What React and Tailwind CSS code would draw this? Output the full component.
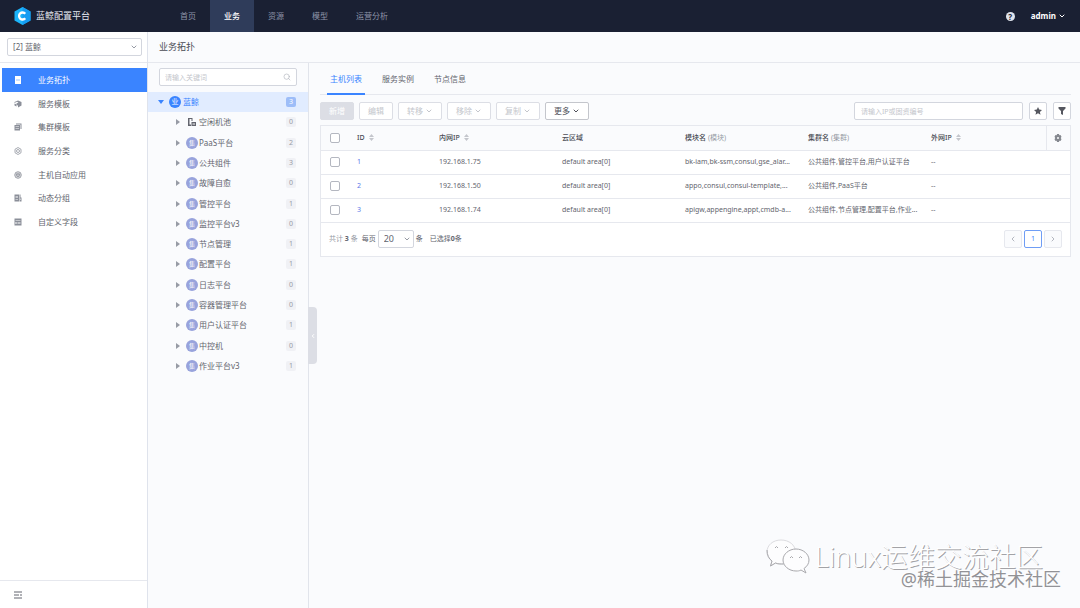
import { useState } from 'react'
import { ChevronDown, ChevronLeft, ChevronRight, Search } from 'lucide-react'

const NAV = ['首页', '业务', '资源', '模型', '运营分析']

const MENU = [
  { label: '业务拓扑', icon: 'topology' },
  { label: '服务模板', icon: 'service' },
  { label: '集群模板', icon: 'cluster' },
  { label: '服务分类', icon: 'category' },
  { label: '主机自动应用', icon: 'apply' },
  { label: '动态分组', icon: 'group' },
  { label: '自定义字段', icon: 'field' },
]

const TREE = [
  { name: '空闲机池', count: 0, idle: true },
  { name: 'PaaS平台', count: 2 },
  { name: '公共组件', count: 3 },
  { name: '故障自愈', count: 0 },
  { name: '管控平台', count: 1 },
  { name: '监控平台v3', count: 0 },
  { name: '节点管理', count: 1 },
  { name: '配置平台', count: 1 },
  { name: '日志平台', count: 0 },
  { name: '容器管理平台', count: 0 },
  { name: '用户认证平台', count: 1 },
  { name: '中控机', count: 0 },
  { name: '作业平台v3', count: 1 },
]

const COLUMNS = [
  { title: 'ID', sortable: true },
  { title: '内网IP', sortable: true },
  { title: '云区域' },
  { title: '模块名', note: '(模块)' },
  { title: '集群名', note: '(集群)' },
  { title: '外网IP', sortable: true },
]

const HOSTS = [
  { id: 1, ip: '192.168.1.75', area: 'default area[0]', module: 'bk-iam,bk-ssm,consul,gse_alar...', set: '公共组件,管控平台,用户认证平台' },
  { id: 2, ip: '192.168.1.50', area: 'default area[0]', module: 'appo,consul,consul-template,...', set: '公共组件,PaaS平台' },
  { id: 3, ip: '192.168.1.74', area: 'default area[0]', module: 'apigw,appengine,appt,cmdb-a...', set: '公共组件,节点管理,配置平台,作业...' },
]

function Logo() {
  return (
    <svg viewBox="0 0 34 36" className="w-[17px] h-[18px]" aria-hidden="true">
      <path d="M17 0 33 9v18L17 36 1 27V9z" fill="#1cb4fa" />
      <path d="M17 0 33 9v18L17 36z" fill="#159cf2" />
      <path d="M22.500 13.500a7 7 0 1 0 0 9" fill="none" stroke="#fff" strokeWidth="4.600" />
    </svg>
  )
}

function MenuIcon({ type }) {
  const common = { viewBox: '0 0 16 16', className: 'w-2 h-2 flex-shrink-0', fill: 'currentColor', 'aria-hidden': true }
  switch (type) {
    case 'topology':
      return <svg {...common}><path fillRule="evenodd" d="M2 0h12v16H2zM5 7v2h2V7zm4 0v2h2V7z" /></svg>
    case 'service':
      return (
        <svg {...common}>
          <path d="M8 1 1 4v2l5-2.500L9 5 5 7v3l3 1v4l7-4V4z" />
          <path d="M1 7v4l4 2V9z" />
        </svg>
      )
    case 'cluster':
      return <svg {...common}><path fillRule="evenodd" d="M4 1h11v11h-2V3H4zM1 4h11v11H1zM3 7v1h7V7zm0 4v1h7v-1z" /></svg>
    case 'category':
      return (
        <svg {...common} fill="none" stroke="currentColor" strokeWidth="1.5">
          <path d="m8 1 6 3.5v7L8 15l-6-3.5v-7z" />
          <circle cx="8" cy="8" r="3" />
        </svg>
      )
    case 'apply':
      return (
        <svg {...common} fill="none" stroke="currentColor" strokeWidth="1.8">
          <circle cx="8" cy="8" r="6.5" />
          <path d="m8 4 3.5 2v4L8 12l-3.5-2V6z" />
          <path d="M8 8v4M8 8 4.500 6M8 8l3.500-2" />
        </svg>
      )
    case 'group':
      return <svg {...common}><path fillRule="evenodd" d="M1 1h9v14H1zM3 4v1h5V4zm0 3v1h5V7zm0 4v1h5v-1zM11 1h2v6h2v8h-4zM12 9v3h1V9z" /></svg>
    default:
      return <svg {...common}><path fillRule="evenodd" d="M1 1h14v14H1zM3 4v1h10V4zm0 4v4h2V8zm4 0v1h6V8zm0 3v1h6v-1z" /></svg>
  }
}

function SortIcon() {
  return (
    <svg viewBox="0 0 10 14" className="w-[5px] h-[7px] text-[#c4c6cc]" fill="currentColor" aria-hidden="true">
      <path d="M5 0l5 6H0zM5 14l5-6H0z" />
    </svg>
  )
}

function TreeNode({ node }) {
  return (
    <li className="flex items-center pl-7 pr-3 text-[#63656e]">
      <svg viewBox="0 0 4 6" className="w-1 h-1.5 mr-1.5 text-[#979ba5]" fill="currentColor" aria-hidden="true">
        <path d="M0 0l4 3-4 3z" />
      </svg>
      {node.idle ? (
        <svg viewBox="0 0 16 16" className="w-3 h-2 text-[#63656e]" fill="currentColor" aria-hidden="true">
          <path fillRule="evenodd" d="M0 0h9v6H7V2H3v11h3v3H0zM7 8h9v8H7zm2 3v2h5v-2z" />
        </svg>
      ) : (
        <span className="w-3 h-3 flex items-center justify-center rounded-full bg-[#98a3dc] text-white text-[6px] leading-3">集</span>
      )}
      <span className="ml-px">{node.name}</span>
      <span className="ml-auto w-2.5 text-center rounded-xs bg-[#f0f1f5] text-[7px] leading-[10px] text-[#979ba5]">{node.count}</span>
    </li>
  )
}

function Sidebar() {
  return (
    <aside className="w-[148px] flex-shrink-0 flex flex-col bg-white border-r border-[#dfe3ec]">
      <div className="h-[31px] flex items-center pl-[7px] pr-[5px] border-b border-[#e6e8ee]">
        <div className="relative w-full">
          <select aria-label="业务" className="w-full h-[18px] pl-[5px] appearance-none border border-[#d3d6de] rounded-xs bg-white text-[#63656e]">
            <option>[2] 蓝鲸</option>
          </select>
          <ChevronDown className="absolute right-1 top-[5px] w-2 h-2 text-[#979ba5] pointer-events-none" strokeWidth={3} />
        </div>
      </div>

      <nav className="grid auto-rows-fr h-[166px] mt-[5px] pl-0.5">
        {MENU.map((item, i) => (
          <a key={item.label} href="#"
            className={`flex items-center pl-3 gap-[16px] ${i === 0 ? 'bg-[#3a84ff] text-white' : 'text-[#63656e]'}`}>
            <span className={i === 0 ? 'text-white' : 'text-[#8b8f99]'}>
              <MenuIcon type={item.icon} />
            </span>
            {item.label}
          </a>
        ))}
      </nav>

      <div className="mt-auto h-7 flex items-center pl-3.5 border-t border-[#e6e8ee]">
        <button aria-label="收起菜单" className="text-[#63656e]">
          <svg viewBox="0 0 16 16" className="w-2 h-2" fill="none" stroke="currentColor" strokeWidth="2" aria-hidden="true">
            <path d="M0 2h16M0 8h10M12 8h4M0 14h16" />
          </svg>
        </button>
      </div>
    </aside>
  )
}

function TopologyTree() {
  return (
    <section className="relative w-[161px] flex-shrink-0 border-r border-[#e1e4eb] pt-[5px]">
      <div className="relative ml-[11px] mr-[11px]">
        <input aria-label="关键词" placeholder="请输入关键词"
          className="w-full h-[18px] px-[5px] border border-[#d3d6de] rounded-xs bg-white text-[7px] placeholder:text-[#c4c6cc]" />
        <Search className="absolute right-1.5 top-[5px] w-2 h-2 text-[#b4b7c0]" />
      </div>

      <ul className="grid auto-rows-fr h-[284px] mt-1.5">
        <li className="flex items-center pl-2.5 pr-3 bg-[#e1ecff] text-[#3a84ff]">
          <svg viewBox="0 0 6 4" className="w-1.5 h-1 mr-[5px]" fill="currentColor" aria-hidden="true">
            <path d="M0 0h6L3 4z" />
          </svg>
          <span className="w-3 h-3 flex items-center justify-center rounded-full bg-[#3a84ff] text-white text-[7px] leading-3">业</span>
          <span className="ml-0.5">蓝鲸</span>
          <span className="ml-auto w-2.5 text-center rounded-xs bg-[#9dbdf8] text-[7px] leading-[10px] text-white">3</span>
        </li>
        {TREE.map((node) => <TreeNode key={node.name} node={node} />)}
      </ul>

      {/* collapse handle hangs over the host list */}
      <button aria-label="收起拓扑" className="absolute left-full top-[244px] w-[9px] h-[57px] flex items-center justify-center rounded-r bg-[#dcdee5] text-white">
        <ChevronLeft className="w-1.5 h-1.5" strokeWidth={4} />
      </button>
    </section>
  )
}

function ToolButton({ label, menu, disabled = true, solid }) {
  return (
    <button disabled={disabled}
      className={`h-[18px] flex items-center justify-center gap-0.5 rounded-xs border ${menu ? 'w-11' : 'w-[34px]'} ${
        solid
          ? 'bg-[#dcdee5] border-[#dcdee5] text-white'
          : disabled
            ? 'bg-white border-[#dcdee5] text-[#c4c6cc]'
            : 'bg-white border-[#c4c6cc] text-[#4f515a]'
      }`}>
      {label}
      {menu && <ChevronDown className="w-2 h-2" strokeWidth={3} />}
    </button>
  )
}

function CheckBox({ label }) {
  return (
    <input type="checkbox" aria-label={label}
      className="block w-2.5 h-2.5 appearance-none border border-[#b4b7c0] rounded-xs bg-white checked:bg-[#3a84ff]" />
  )
}

function HostTable() {
  return (
    <div className="mt-[5px] border border-[#e6e8ee] bg-white text-[7px] text-[#63656e]">
      <table className="w-full table-fixed border-collapse text-left">
        <colgroup>
          <col className="w-7" />
          <col className="w-[82px]" />
          <col />
          <col />
          <col />
          <col />
          <col />
          <col className="w-6" />
        </colgroup>
        <thead>
          <tr className="h-6 bg-[#fafbfd] border-b border-[#e6e8ee] text-[#4a4c55]">
            <th className="pl-[9px]"><CheckBox label="全选" /></th>
            {COLUMNS.map((col) => (
              <th key={col.title} className="pl-2 font-medium">
                <span className="flex items-center gap-1">
                  {col.title}
                  {col.note && <span className="-ml-0.5 font-normal text-[#979ba5]">{col.note}</span>}
                  {col.sortable && <SortIcon />}
                </span>
              </th>
            ))}
            <th className="border-l border-[#e6e8ee]">
              <button aria-label="列设置" className="flex mx-auto text-[#85888f]">
                <svg viewBox="0 0 16 16" className="w-2 h-2" fill="currentColor" aria-hidden="true">
                  <path fillRule="evenodd" d="M6 0h4l.5 2.500L13 2l2 3.500L13.500 8 15 10.500 13 14l-2.500-.5L10 16H6l-.5-2.500L3 14l-2-3.500L2.500 8 1 5.500 3 2l2.500.5zM8 6a2 2 0 1 0 0 4 2 2 0 0 0 0-4z" />
                </svg>
              </button>
            </th>
          </tr>
        </thead>
        <tbody>
          {HOSTS.map((host) => (
            <tr key={host.id} className="h-6 border-b border-[#e6e8ee]">
              <td className="pl-[9px]"><CheckBox label={`选择主机 ${host.id}`} /></td>
              <td className="pl-2"><a href="#" className="text-[#5a78e8]">{host.id}</a></td>
              <td className="pl-2">{host.ip}</td>
              <td className="pl-2">{host.area}</td>
              <td className="pl-2 whitespace-nowrap">{host.module}</td>
              <td className="pl-2 whitespace-nowrap">{host.set}</td>
              <td className="pl-2">--</td>
              <td />
            </tr>
          ))}
        </tbody>
      </table>

      <div className="h-[33px] flex items-center px-2">
        <span className="text-[#979ba5]">共计 <b className="text-[#63656e]">3</b> 条</span>
        <label className="flex items-center ml-1">
          每页
          <span className="relative mx-0.5">
            <select className="w-9 h-[18px] pl-[5px] appearance-none border border-[#d3d6de] rounded-xs bg-white text-[9px]">
              <option>20</option>
            </select>
            <ChevronDown className="absolute right-[3px] top-[5px] w-2 h-2 text-[#979ba5] pointer-events-none" strokeWidth={3} />
          </span>
          条
        </label>
        <span className="ml-[7px]">已选择<b>0</b>条</span>

        <div className="ml-auto flex gap-0.5">
          <button aria-label="上一页" disabled className="w-[18px] h-[18px] flex items-center justify-center border border-[#e6e8ee] rounded-xs bg-[#fafbfd] text-[#b4b7c0]">
            <ChevronLeft className="w-2 h-2" strokeWidth={3} />
          </button>
          <button className="w-[18px] h-[18px] border border-[#6f9df5] rounded-xs text-[#3a84ff]">1</button>
          <button aria-label="下一页" disabled className="w-[18px] h-[18px] flex items-center justify-center border border-[#e6e8ee] rounded-xs bg-[#fafbfd] text-[#b4b7c0]">
            <ChevronRight className="w-2 h-2" strokeWidth={3} />
          </button>
        </div>
      </div>
    </div>
  )
}

function Watermark() {
  return (
    <div className="absolute right-[19px] bottom-[17px] flex flex-col items-end pointer-events-none">
      <div className="flex items-center gap-[5px] mr-[18px]">
        <svg viewBox="0 0 44 36" className="w-11 h-9" fill="#fdfdfe" stroke="#a9a9ad" strokeWidth="1" aria-hidden="true">
          <path d="M15 1C7 1 1 6 1 13c0 4 2 7 5 9l-1.500 5 5-3c2 1 4 1 6 1 8 0 14-5 14-12S23 1 15 1z" stroke="#dcdce0" />
          <path d="M1 11c0 5 2 9 5 11l-1.500 5 5-3c2 1 5 1 8 1" fill="none" />
          <path d="M30 10c-7 0-13 5-13 11s6 11 13 11c2 0 3 0 5-1l5 3-2-4.500c3-2 5-5 5-8.500 0-6-6-11-13-11z" />
          <path d="M9 9q1.500-3 3 0M19 9q1.500-3 3 0M24 19q1.500-3 3 0M33 19q1.500-3 3 0" fill="none" />
        </svg>
        <span className="text-[27px] leading-8 font-light text-white [text-shadow:1px_1px_0_#a3a3a7]">Linux运维交流社区</span>
      </div>
      <span className="-mt-2 text-[18px] leading-6 text-[#929296] [text-shadow:-1px_-1px_0_#fff]">@稀土掘金技术社区</span>
    </div>
  )
}

export default function App() {
  const [tab, setTab] = useState('主机列表')

  return (
    <div className="relative min-h-screen flex flex-col bg-[#fafbfd] text-[8px] leading-3 text-[#63656e] font-['Noto_Sans','Noto_Sans_CJK_SC',sans-serif]">
      <header className="h-8 flex-shrink-0 flex items-center bg-[#1a2033] text-[#8e95a8]">
        <div className="w-[166px] flex items-center gap-[5px] pl-3.5 text-[9px] text-[#e6e9f0]">
          <Logo />
          蓝鲸配置平台
        </div>
        <nav className="flex h-full">
          {NAV.map((item) => (
            <a key={item} href="#"
              className={`flex items-center px-[14px] ${item === '业务' ? 'bg-[#2f3c5a] text-white font-medium' : ''}`}>
              {item}
            </a>
          ))}
        </nav>
        <div className="ml-auto mr-3.5 flex items-center gap-4">
          <button aria-label="帮助" className="w-[9px] h-[9px] flex items-center justify-center rounded-full bg-[#dfe3ec] text-[#1a2033] text-[8px] leading-[9px] font-bold">?</button>
          <button className="flex items-center gap-0.5 font-bold text-white">
            admin
            <ChevronDown className="w-2 h-2" strokeWidth={3} />
          </button>
        </div>
      </header>

      <div className="flex-1 flex">
        <Sidebar />

        <div className="flex-1 min-w-0 flex flex-col">
          <h1 className="h-[31px] flex items-center pl-[11px] border-b border-[#e6e8ee] text-[9px] text-[#4a4c55]">业务拓扑</h1>

          <div className="flex-1 flex">
            <TopologyTree />

            <main className="flex-1 min-w-0 pl-[11px] pr-[9px]">
              <div role="tablist" className="h-8 flex gap-3.5 pl-[7px] border-b border-[#e6e8ee]">
                {['主机列表', '服务实例', '节点信息'].map((name) => (
                  <button key={name} role="tab" aria-selected={tab === name} onClick={() => setTab(name)}
                    className={`h-8 px-[3px] pt-0.5 border-b-2 ${tab === name ? 'border-[#3a84ff] text-[#3a84ff]' : 'border-transparent'}`}>
                    {name}
                  </button>
                ))}
              </div>

              <div className="flex items-center gap-[5px] mt-[7px]">
                <ToolButton label="新增" solid />
                <ToolButton label="编辑" />
                <ToolButton label="转移" menu />
                <ToolButton label="移除" menu />
                <ToolButton label="复制" menu />
                <ToolButton label="更多" menu disabled={false} />

                <div className="ml-auto flex gap-1.5">
                  <input aria-label="主机搜索" placeholder="请输入IP或固资编号"
                    className="w-[169px] h-[18px] px-1.5 border border-[#d3d6de] rounded-xs bg-white text-[7px] placeholder:text-[#c4c6cc]" />
                  <button aria-label="收藏" className="w-[18px] h-[18px] flex items-center justify-center border border-[#d3d6de] rounded-xs bg-white text-[#55575f]">
                    <svg viewBox="0 0 16 16" className="w-2 h-2" fill="currentColor" aria-hidden="true">
                      <path d="m8 0 2.400 5.200 5.600.7-4.200 3.900L13 15.500l-5-2.800-5 2.800 1.200-5.700L0 5.900l5.600-.7z" />
                    </svg>
                  </button>
                  <button aria-label="筛选" className="w-[18px] h-[18px] flex items-center justify-center border border-[#d3d6de] rounded-xs bg-white text-[#55575f]">
                    <svg viewBox="0 0 16 16" className="w-2 h-2" fill="currentColor" aria-hidden="true">
                      <path d="M1 0h14v3l-5 5v8l-4-2V8L1 3z" />
                    </svg>
                  </button>
                </div>
              </div>

              <HostTable />
            </main>
          </div>
        </div>
      </div>

      <Watermark />
    </div>
  )
}
